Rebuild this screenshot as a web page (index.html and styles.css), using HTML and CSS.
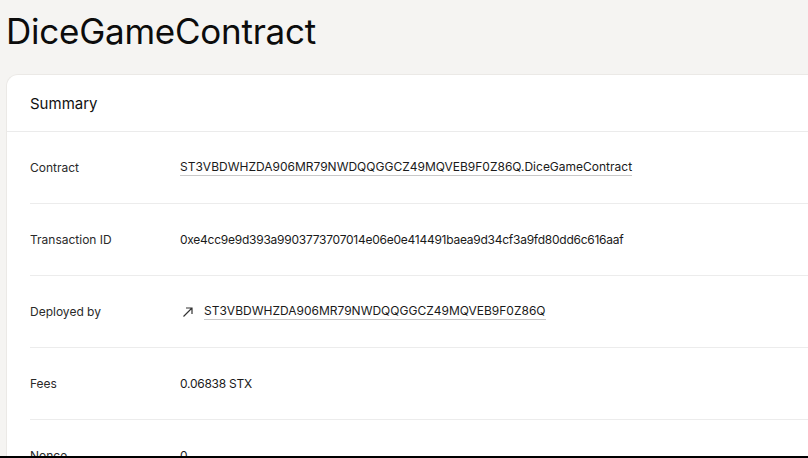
FILE: index.html
```html
<!DOCTYPE html>
<html>
<head>
<meta charset="utf-8">
<link rel="stylesheet" href="styles.css">
</head>
<body>
<div class="page">
  <h1 class="title">DiceGameContract</h1>
  <section class="card">
    <div class="card-header">Summary</div>
    <div class="rows">
      <div class="row">
        <div class="label">Contract</div>
        <div class="value"><span class="link">ST3VBDWHZDA906MR79NWDQQGGCZ49MQVEB9F0Z86Q.DiceGameContract</span></div>
      </div>
      <div class="row">
        <div class="label">Transaction ID</div>
        <div class="value num">0xe4cc9e9d393a9903773707014e06e0e414491baea9d34cf3a9fd80dd6c616aaf</div>
      </div>
      <div class="row">
        <div class="label">Deployed by</div>
        <div class="value">
          <svg class="arrow" width="12" height="12" viewBox="0 0 12 12"><path d="M1.5 10.5 L10 2 M4 2 H10 V8" fill="none" stroke="#333" stroke-width="1.2"/></svg>
          <span class="link">ST3VBDWHZDA906MR79NWDQQGGCZ49MQVEB9F0Z86Q</span>
        </div>
      </div>
      <div class="row">
        <div class="label">Fees</div>
        <div class="value num">0.06838 STX</div>
      </div>
      <div class="row">
        <div class="label">Nonce</div>
        <div class="value">0</div>
      </div>
    </div>
  </section>
</div>
<div class="bottom-bar"></div>
</body>
</html>
```
FILE: styles.css
```css
html, body {
  margin: 0;
  padding: 0;
  background: #f5f4f2;
  font-family: Inter, "Noto Sans", sans-serif;
  color: #111;
  overflow: hidden;
}
.page {
  padding-left: 6px;
}
.title {
  margin: 0;
  padding-top: 9px;
  height: 74px;
  box-sizing: border-box;
  font-size: 35px;
  font-weight: 400;
  line-height: 44px;
  letter-spacing: -0.25px;
  color: #0c0c0c;
}
.card {
  background: #fff;
  border: 1px solid #ebe9e6;
  border-right: none;
  border-radius: 12px 0 0 0;
  width: 900px;
}
.card-header {
  height: 56px;
  display: flex;
  align-items: center;
  padding-left: 23px;
  font-size: 15px;
  color: #111;
  border-bottom: 1px solid #ebebeb;
}
.rows {
  padding-left: 23px;
}
.row {
  height: 71px;
  display: flex;
  align-items: center;
  border-bottom: 1px solid #ececec;
}
.label {
  width: 150px;
  font-size: 12px;
  color: #2a2a2a;
}
.value {
  font-size: 12px;
  color: #1a1a1a;
  display: flex;
  align-items: center;
}
.num {
  letter-spacing: -0.25px;
}
.link {
  border-bottom: 1px solid #c9c9c9;
  padding-bottom: 1px;
}
.arrow {
  margin-left: 2px;
  margin-right: 10px;
}
.bottom-bar {
  position: fixed;
  left: 0;
  right: 0;
  bottom: 0;
  height: 2px;
  background: #000;
}
```
